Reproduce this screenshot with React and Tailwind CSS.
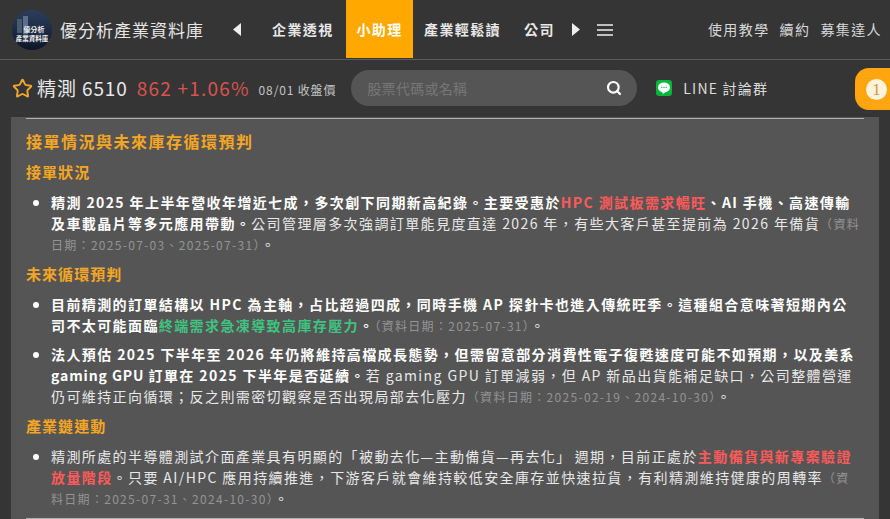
import React from "react";
import { Star, Search } from "lucide-react";

const F = '"Noto Sans CJK TC","Noto Sans",sans-serif';

function Logo() {
  return (
    <svg width="40" height="40" viewBox="0 0 40 40" className="shrink-0">
      <defs>
        <linearGradient id="g" x1="0" y1="0" x2="0" y2="1">
          <stop offset="0" stopColor="#2a3f5e" />
          <stop offset="1" stopColor="#0e1628" />
        </linearGradient>
      </defs>
      <circle cx="20" cy="20" r="20" fill="url(#g)" />
      <rect x="5" y="9" width="5" height="14" fill="#4a5a6e" />
      <rect x="11" y="6" width="5" height="18" fill="#5d6f88" />
      <text x="22" y="22" fontSize="7" fontWeight="700" textAnchor="middle" fill="#eee" fontFamily={F}>優分析</text>
      <text x="20" y="31" fontSize="6.5" fontWeight="700" textAnchor="middle" fill="#eee" fontFamily={F}>產業資料庫</text>
    </svg>
  );
}

function Line() {
  return (
    <svg width="16" height="16" viewBox="0 0 16 16" className="shrink-0">
      <rect width="16" height="16" rx="3" fill="#06b53c" />
      <ellipse cx="8" cy="7.4" rx="6" ry="5" fill="#fff" />
      <path d="M6 11.5 L7 14 L10 11.5Z" fill="#fff" />
      <circle cx="5.8" cy="7.4" r=".6" fill="#06b53c" />
      <circle cx="8" cy="7.4" r=".6" fill="#06b53c" />
      <circle cx="10.2" cy="7.4" r=".6" fill="#06b53c" />
    </svg>
  );
}

const Src = ({ children }) => <span className="text-[#949494] font-normal text-[12px] tracking-[1.3px]">{children}</span>;
const B = ({ children }) => <span className="font-bold text-white">{children}</span>;
const H = ({ children, className = "" }) => <h3 className={"text-[#f5a623] font-bold leading-[22px] " + className}>{children}</h3>;

function Li({ children, className = "" }) {
  return (
    <li className={"flex pr-[3px] " + className}>
      <span className="w-[25px] shrink-0 flex justify-start pl-[7px] pt-[8px]">
        <span className="block w-[6px] h-[6px] rounded-full bg-white" />
      </span>
      <p className="flex-1 min-w-0">{children}</p>
    </li>
  );
}

export default function App() {
  return (
    <div className="w-[890px] h-[519px] overflow-hidden bg-[#353535] text-[#e8e8e8] relative" style={{ fontFamily: F }}>
      <header className="h-[60px] flex items-center border-b border-[#5c5c5c]">
        <div className="w-[12px] shrink-0" />
        <Logo />
        <div className="ml-[8px] w-[160px] text-[17px] tracking-[1px] text-[#e6e6e6] whitespace-nowrap">優分析產業資料庫</div>
        <div className="w-[28px] ml-[3px] flex justify-center">
          <svg width="8" height="13" viewBox="0 0 8 13"><path d="M8 0V13L0 6.5Z" fill="#eee" /></svg>
        </div>
        <nav className="flex items-stretch h-[58px] self-start ml-[12px] text-[14px] font-bold tracking-[1.4px] whitespace-nowrap">
          <div className="w-[83px] flex items-center pl-[9px] text-[#e8e8e8]">企業透視</div>
          <div className="w-[67px] flex items-center justify-center bg-[#ffa800] text-white">小助理</div>
          <div className="w-[100px] flex items-center pl-[11px] text-[#e8e8e8]">產業輕鬆讀</div>
          <div className="w-[50px] flex items-center pl-[11px] text-[#e8e8e8]">公司</div>
        </nav>
        <div className="w-[22px] flex justify-center ml-[2px]">
          <svg width="8" height="13" viewBox="0 0 8 13"><path d="M0 0V13L8 6.5Z" fill="#eee" /></svg>
        </div>
        <svg width="18" height="14" viewBox="0 0 18 14" className="ml-[9px]">
          <path d="M1 2H17M1 7H17M1 12H17" stroke="#eee" strokeWidth="1.6" />
        </svg>
        <div className="ml-auto mr-[8px] flex gap-[10px] text-[14px] tracking-[1.4px] text-[#d8d8d8] whitespace-nowrap">
          <span>使用教學</span><span>續約</span><span>募集達人</span>
        </div>
      </header>

      <div className="h-[56px] flex items-center">
        <Star size={21} strokeWidth={2.2} className="ml-[12px] text-[#f0a52c] shrink-0" />
        <div className="ml-[4px] text-[19px] tracking-[0.9px] whitespace-nowrap">精測 6510</div>
        <div className="ml-[9px] text-[19px] tracking-[1.2px] text-[#d9534f] whitespace-nowrap">862 +1.06%</div>
        <div className="ml-[9px] text-[12px] tracking-[0.85px] text-[#c4c4c4] whitespace-nowrap mt-[3px]">08/01 收盤價</div>
        <div className="ml-[15px] w-[286px] h-[36px] rounded-full bg-[#555] flex items-center pl-[16px] pr-[15px]">
          <span className="text-[14px] tracking-[0.3px] text-[#777]">股票代碼或名稱</span>
          <Search size={16} strokeWidth={3.2} className="ml-auto text-white" />
        </div>
        <div className="ml-[19px]"><Line /></div>
        <div className="ml-[11px] text-[14px] tracking-[1.2px] text-[#dcdcdc] whitespace-nowrap">LINE 討論群</div>
      </div>

      <div className="absolute right-0 top-[68px] w-[35px] h-[42px] bg-[#ffa50f] rounded-l-[14px] flex items-center pl-[11px]">
        <span className="w-[21px] h-[21px] rounded-full bg-[#fff3dc] flex items-center justify-center text-[#d09a3c] text-[17px] leading-none" style={{ fontFamily: '"Liberation Serif",serif' }}>1</span>
      </div>

      <main className="ml-[11px] w-[868px] bg-[#555555] mt-[1px] pt-[1px] px-[15px] h-[420px] text-[14px] leading-[21px] tracking-[1.4px] text-[#e8e8e8]">
        <hr className="border-0 border-t border-[#b0b0b0] w-[838px]" />
        <H className="mt-[11px] text-[16px] tracking-[1.5px]">接單情況與未來庫存循環預判</H>
        <H className="mt-[9px] text-[15px] tracking-[1.05px]">接單狀況</H>
        <ul className="mt-[9px]">
          <Li>
            <B>精測 2025 年上半年營收年增近七成，多次創下同期新高紀錄。主要受惠於</B>
            <span className="font-bold text-[#ff5a5a]">HPC 測試板需求暢旺</span>
            <B>、AI 手機、高速傳輸及車載晶片等多元應用帶動。</B>
            公司管理層多次強調訂單能見度直達 2026 年，有些大客戶甚至提前為 2026 年備貨
            <Src>（資料日期：2025-07-03、2025-07-31）</Src>。
          </Li>
        </ul>
        <H className="mt-[8px] text-[15px] tracking-[1.05px]">未來循環預判</H>
        <ul className="mt-[9px]">
          <Li>
            <B>目前精測的訂單結構以 HPC 為主軸，占比超過四成，同時手機 AP 探針卡也進入傳統旺季。這種組合意味著短期內公司不太可能面臨</B>
            <span className="font-bold text-[#3fc380]">終端需求急凍導致高庫存壓力</span>
            <B>。</B>
            <Src>（資料日期：2025-07-31）</Src>。
          </Li>
          <Li className="mt-[8px]">
            <B>法人預估 2025 下半年至 2026 年仍將維持高檔成長態勢，但需留意部分消費性電子復甦速度可能不如預期，以及美系 </B>
            <span className="font-bold text-white tracking-[0.9px]">gaming GPU </span>
            <B>訂單在 2025 下半年是否延續。</B>
            若 gaming GPU 訂單減弱，但 AP 新品出貨能補足缺口，公司整體營運仍可維持正向循環；反之則需密切觀察是否出現局部去化壓力
            <Src>（資料日期：2025-02-19、2024-10-30）</Src>。
          </Li>
        </ul>
        <H className="mt-[8px] text-[15px] tracking-[1.05px]">產業鏈連動</H>
        <ul className="mt-[9px]">
          <Li>
            精測所處的半導體測試介面產業具有明顯的「被動去化—主動備貨—再去化<span className="tracking-[4.4px]">」</span>週期，目前正處於
            <span className="font-bold text-[#ff5a5a]">主動備貨與新專案驗證放量階段</span>
            。只要 AI/HPC 應用持續推進，下游客戶就會維持較低安全庫存並快速拉貨，有利精測維持健康的周轉率
            <Src>（資料日期：2025-07-31、2024-10-30）</Src>。
          </Li>
        </ul>
        <hr className="border-0 border-t border-[#b0b0b0] w-[838px] mt-[9px]" />
      </main>
    </div>
  );
}
